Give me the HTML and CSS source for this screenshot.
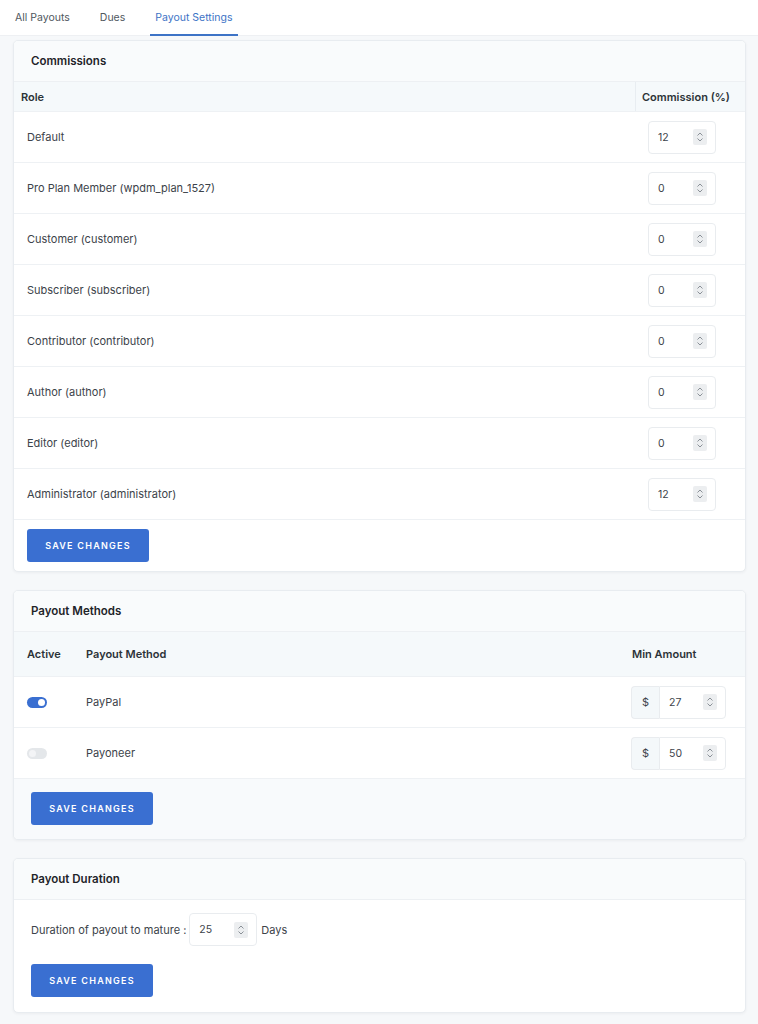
FILE: index.html
```html
<!DOCTYPE html>
<html>
<head>
<meta charset="utf-8">
<link rel="stylesheet" href="styles.css">
</head>
<body>
<nav class="tabs">
  <a class="tab">All Payouts</a>
  <a class="tab">Dues</a>
  <a class="tab active">Payout Settings</a>
</nav>
<main class="page">
  <section class="card">
    <header class="card-head">Commissions</header>
    <div class="ctable">
      <div class="crow chead"><div class="c-role">Role</div><div class="c-com">Commission (%)</div></div>
      <div class="crow"><div class="c-role">Default</div><div class="c-com"><span class="num"><span class="v">12</span><span class="spin"><svg viewBox="0 0 10 14" width="10" height="14"><path d="M2.5 5.5L5 3L7.5 5.5M2.5 8.5L5 11L7.5 8.5" fill="none" stroke="#8a9097" stroke-width="1"/></svg></span></span></div></div>
      <div class="crow"><div class="c-role">Pro Plan Member (wpdm_plan_1527)</div><div class="c-com"><span class="num"><span class="v">0</span><span class="spin"><svg viewBox="0 0 10 14" width="10" height="14"><path d="M2.5 5.5L5 3L7.5 5.5M2.5 8.5L5 11L7.5 8.5" fill="none" stroke="#8a9097" stroke-width="1"/></svg></span></span></div></div>
      <div class="crow"><div class="c-role">Customer (customer)</div><div class="c-com"><span class="num"><span class="v">0</span><span class="spin"><svg viewBox="0 0 10 14" width="10" height="14"><path d="M2.5 5.5L5 3L7.5 5.5M2.5 8.5L5 11L7.5 8.5" fill="none" stroke="#8a9097" stroke-width="1"/></svg></span></span></div></div>
      <div class="crow"><div class="c-role">Subscriber (subscriber)</div><div class="c-com"><span class="num"><span class="v">0</span><span class="spin"><svg viewBox="0 0 10 14" width="10" height="14"><path d="M2.5 5.5L5 3L7.5 5.5M2.5 8.5L5 11L7.5 8.5" fill="none" stroke="#8a9097" stroke-width="1"/></svg></span></span></div></div>
      <div class="crow"><div class="c-role">Contributor (contributor)</div><div class="c-com"><span class="num"><span class="v">0</span><span class="spin"><svg viewBox="0 0 10 14" width="10" height="14"><path d="M2.5 5.5L5 3L7.5 5.5M2.5 8.5L5 11L7.5 8.5" fill="none" stroke="#8a9097" stroke-width="1"/></svg></span></span></div></div>
      <div class="crow"><div class="c-role">Author (author)</div><div class="c-com"><span class="num"><span class="v">0</span><span class="spin"><svg viewBox="0 0 10 14" width="10" height="14"><path d="M2.5 5.5L5 3L7.5 5.5M2.5 8.5L5 11L7.5 8.5" fill="none" stroke="#8a9097" stroke-width="1"/></svg></span></span></div></div>
      <div class="crow"><div class="c-role">Editor (editor)</div><div class="c-com"><span class="num"><span class="v">0</span><span class="spin"><svg viewBox="0 0 10 14" width="10" height="14"><path d="M2.5 5.5L5 3L7.5 5.5M2.5 8.5L5 11L7.5 8.5" fill="none" stroke="#8a9097" stroke-width="1"/></svg></span></span></div></div>
      <div class="crow"><div class="c-role">Administrator (administrator)</div><div class="c-com"><span class="num"><span class="v">12</span><span class="spin"><svg viewBox="0 0 10 14" width="10" height="14"><path d="M2.5 5.5L5 3L7.5 5.5M2.5 8.5L5 11L7.5 8.5" fill="none" stroke="#8a9097" stroke-width="1"/></svg></span></span></div></div>
    </div>
    <div class="save-area white"><button class="btn">SAVE CHANGES</button></div>
  </section>

  <section class="card">
    <header class="card-head">Payout Methods</header>
    <div class="mtable">
      <div class="mrow mhead"><div>Active</div><div>Payout Method</div><div>Min Amount</div></div>
      <div class="mrow"><div><span class="toggle on"></span></div><div>PayPal</div><div><span class="group"><span class="addon">$</span><span class="num in-group"><span class="v">27</span><span class="spin"><svg viewBox="0 0 10 14" width="10" height="14"><path d="M2.5 5.5L5 3L7.5 5.5M2.5 8.5L5 11L7.5 8.5" fill="none" stroke="#8a9097" stroke-width="1"/></svg></span></span></span></div></div>
      <div class="mrow"><div><span class="toggle"></span></div><div>Payoneer</div><div><span class="group"><span class="addon">$</span><span class="num in-group"><span class="v">50</span><span class="spin"><svg viewBox="0 0 10 14" width="10" height="14"><path d="M2.5 5.5L5 3L7.5 5.5M2.5 8.5L5 11L7.5 8.5" fill="none" stroke="#8a9097" stroke-width="1"/></svg></span></span></span></div></div>
    </div>
    <div class="save-area footer"><button class="btn">SAVE CHANGES</button></div>
  </section>

  <section class="card">
    <header class="card-head">Payout Duration</header>
    <div class="dbody">
      <div class="dline"><span>Duration of payout to mature :</span><span class="num"><span class="v">25</span><span class="spin"><svg viewBox="0 0 10 14" width="10" height="14"><path d="M2.5 5.5L5 3L7.5 5.5M2.5 8.5L5 11L7.5 8.5" fill="none" stroke="#8a9097" stroke-width="1"/></svg></span></span><span>Days</span></div>
      <button class="btn">SAVE CHANGES</button>
    </div>
  </section>
</main>
</body>
</html>
```

FILE: styles.css
```css
* { box-sizing: border-box; }
html, body { margin: 0; padding: 0; }
body {
  background: #f6f8fa;
  font-family: Inter, "Noto Sans", "Liberation Sans", sans-serif;
  font-size: 11px;
  color: #3c434a;
  width: 758px;
  min-height: 1024px;
}
.tabs {
  height: 36px;
  background: #fff;
  display: flex;
  padding-left: 10px;
  gap: 20px;
  border-bottom: 1px solid #eef0f3;
}
.tab {
  display: flex;
  align-items: center;
  padding: 0 5px;
  height: 36px;
  color: #50575e;
  font-size: 10.5px;
  border-bottom: 2px solid transparent;
}
.tab.active {
  color: #3d73c6;
  border-bottom-color: #3d73c6;
}
.page {
  padding: 4px 12px 0 13px;
  display: flex;
  flex-direction: column;
  gap: 18px;
}
.card {
  background: #fff;
  border: 1px solid #e8ecf0;
  border-radius: 5px;
  box-shadow: 0 1px 3px rgba(30, 40, 60, 0.05);
  overflow: hidden;
}
.card-head {
  height: 41px;
  display: flex;
  align-items: center;
  padding-left: 17px;
  background: #f9fbfc;
  border-bottom: 1px solid #edf0f3;
  font-weight: 600;
  font-size: 11.5px;
  color: #1f2429;
}
.crow {
  display: grid;
  grid-template-columns: 1fr 110px;
  height: 51px;
  border-bottom: 1px solid #eef1f4;
  align-items: center;
}
.crow > .c-role { padding-left: 13px; }
.crow > .c-com { padding-left: 13px; height: 100%; display: flex; align-items: center; }
.crow.chead {
  height: 30px;
  background: #f5f9fb;
  font-weight: 600;
  color: #2c3338;
  font-size: 11px;
}
.crow.chead > .c-role { padding-left: 7px; }
.crow.chead > .c-com { border-left: 1px solid #e8edf1; padding-left: 6px; }
.num {
  display: inline-flex;
  align-items: center;
  justify-content: space-between;
  width: 68px;
  height: 33px;
  border: 1px solid #e9ecef;
  border-radius: 4px;
  background: #fff;
  padding: 0 8px 0 9px;
  color: #3c434a;
  font-size: 10.5px;
}
.spin {
  width: 14px;
  height: 16px;
  background: #eceef0;
  border-radius: 2px;
  display: flex;
  align-items: center;
  justify-content: center;
}
.save-area.white { padding: 9px 13px 9px; }
.save-area.footer {
  padding: 13px 17px 14px;
  background: #f8fafc;
}
.btn {
  display: block;
  width: 122px;
  height: 33px;
  border: none;
  border-radius: 3px;
  background: #3a6fd1;
  color: #fff;
  font-family: Inter, "Noto Sans", "Liberation Sans", sans-serif;
  font-weight: 600;
  font-size: 9px;
  letter-spacing: 1.25px;
  padding: 0;
}
.mrow {
  display: grid;
  grid-template-columns: 72px 1fr 128px;
  height: 51px;
  align-items: center;
  border-bottom: 1px solid #eef1f4;
}
.mrow > div:first-child { padding-left: 13px; }
.mrow > div:nth-child(2) { padding-left: 0; }
.mrow > div:last-child { padding-left: 14px; }
.mrow.mhead {
  height: 45px;
  background: #f5f9fb;
  font-weight: 600;
  color: #2c3338;
}
.mrow.mhead > div:last-child { padding-left: 15px; }
.toggle {
  display: block;
  width: 20px;
  height: 11px;
  border-radius: 6px;
  background: #e4e7ea;
  position: relative;
}
.toggle::after {
  content: "";
  position: absolute;
  top: 2px;
  left: 2px;
  width: 7px;
  height: 7px;
  border-radius: 50%;
  background: #f3f4f6;
}
.toggle.on { background: #3a6fd1; }
.toggle.on::after { left: 11px; background: #fff; }
.group {
  display: inline-flex;
  height: 33px;
}
.addon {
  width: 28px;
  height: 33px;
  display: flex;
  align-items: center;
  justify-content: center;
  background: #f4f8fa;
  border: 1px solid #e9ecef;
  border-right: none;
  border-radius: 4px 0 0 4px;
  color: #3c434a;
  font-size: 11px;
}
.num.in-group { border-radius: 0 4px 4px 0; width: 67px; }
.dbody { padding: 13px 17px 15px; }
.dline {
  display: flex;
  align-items: center;
  gap: 3px;
  margin-bottom: 18px;
}
.dline > span:last-child { margin-left: 1px; }
```
